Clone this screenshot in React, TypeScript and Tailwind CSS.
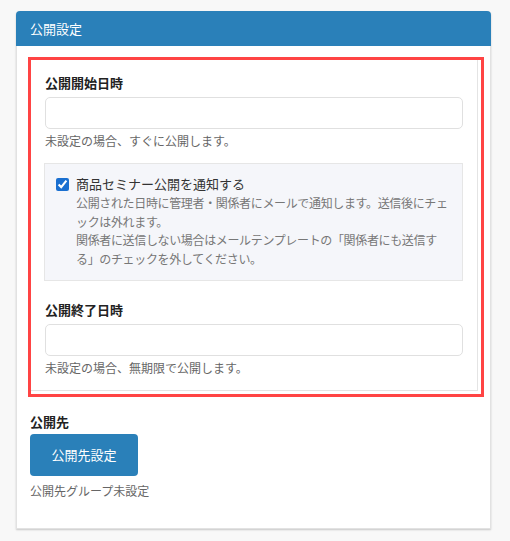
import React from 'react';

const font = { fontFamily: '"Noto Sans CJK JP", "Noto Sans", sans-serif' };

function Field({ label, help }: { label: string; help: string }) {
  return (
    <div>
      <p className="text-[13px] leading-[19px] font-bold text-[#222]">{label}</p>
      <input
        type="text"
        className="mt-[5px] block w-full h-[32px] rounded-[5px] border border-[#e0e0e0] bg-white px-2 text-[13px] outline-none"
      />
      <p className="mt-[3px] text-[12px] leading-[18px] text-[#666]">{help}</p>
    </div>
  );
}

export default function App() {
  return (
    <div className="min-h-[541px] bg-[#f8f8f8] pt-[11px] px-[16px]" style={font}>
      <div className="w-[475px] rounded-t-[4px] border border-[#e2e2e2] bg-white shadow-[0_1px_2px_rgba(0,0,0,0.2)]">
        {/* Header */}
        <div className="-mx-px -mt-px h-[35px] rounded-t-[4px] bg-[#2a80b9] px-[14px] flex items-center">
          <h2 className="text-[13px] text-white">公開設定</h2>
        </div>

        {/* Schedule section */}
        <div className="ml-[11px] mr-[6px] mt-[11px] border-[3px] border-[#ff4444]">
          <div className="mr-[3px] mb-[3px] border-r border-b border-[#e4e4e4] pt-[13px] pl-[14px] pr-[14px] pb-[13px]">
            <Field label="公開開始日時" help="未設定の場合、すぐに公開します。" />

            <div className="mt-[13px] -ml-px border border-[#e6e6e6] bg-[#f5f6fa] pl-[11px] pr-[8px] pt-[10px] pb-[12px]">
              <label className="flex items-start gap-[7px]">
                <input
                  type="checkbox"
                  defaultChecked
                  className="mt-[4px] h-[13px] w-[13px] shrink-0 accent-[#1a6fd0]"
                />
                <div>
                  <p className="text-[13px] leading-[20px] text-[#333]">商品セミナー公開を通知する</p>
                  <p className="text-[12px] leading-[18.5px] tracking-[-0.35px] text-[#777]">
                    公開された日時に管理者・関係者にメールで通知します。送信後にチェックは外れます。
                  </p>
                  <p className="text-[12px] leading-[18.5px] tracking-[-0.35px] text-[#777] pr-[12px]">
                    関係者に送信しない場合はメールテンプレートの「関係者にも送信する」のチェックを外してください。
                  </p>
                </div>
              </label>
            </div>

            <div className="mt-[19px]">
              <Field label="公開終了日時" help="未設定の場合、無期限で公開します。" />
            </div>
          </div>
        </div>

        {/* Destination */}
        <div className="px-[13px] pt-[15px] pb-[28px]">
          <p className="text-[13px] leading-[19px] font-bold text-[#222]">公開先</p>
          <button className="mt-[3px] h-[42px] w-[108px] rounded-[4px] bg-[#2a80b9] text-[13px] text-white">
            公開先設定
          </button>
          <p className="mt-[6px] text-[12px] leading-[18px] text-[#666]">公開先グループ未設定</p>
        </div>
      </div>
    </div>
  );
}
